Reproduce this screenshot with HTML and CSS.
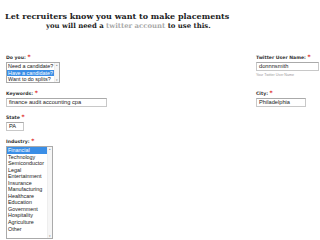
FILE: index.html
```html
<!DOCTYPE html>
<html>
<head>
<meta charset="utf-8">
<link rel="stylesheet" href="styles.css">
</head>
<body>
<div class="header">
  <div class="title">Let recruiters know you want to make placements</div>
  <div class="subtitle">you will need a <span class="link">twitter account</span> to use this.</div>
</div>
<div class="form">
  <div class="field">
    <div class="label">Do you: <span class="req">*</span></div>
    <div class="listbox lb-small">
      <div class="opts">
        <div class="opt">Need a candidate?</div>
        <div class="opt sel">Have a candidate?</div>
        <div class="opt">Want to do splits?</div>
      </div>
      <div class="sb"><span class="arr">&#9652;</span><span class="arr">&#9662;</span></div>
    </div>
  </div>
  <div class="field">
    <div class="label">Twitter User Name: <span class="req">*</span></div>
    <div class="input in-tw">donnnsmith</div>
    <div class="hint">Your Twitter User Name</div>
  </div>
  <div class="field">
    <div class="label">Keywords: <span class="req">*</span></div>
    <div class="input in-kw">finance audit accounting cpa</div>
  </div>
  <div class="field">
    <div class="label">City: <span class="req">*</span></div>
    <div class="input in-city">Philadelphia</div>
  </div>
  <div class="field">
    <div class="label">State <span class="req">*</span></div>
    <div class="input in-state">PA</div>
  </div>
  <div></div>
  <div class="field">
    <div class="label">Industry: <span class="req">*</span></div>
    <div class="listbox lb-ind">
      <div class="opts">
        <div class="opt sel">Financial</div>
        <div class="opt">Technology</div>
        <div class="opt">Semiconductor</div>
        <div class="opt">Legal</div>
        <div class="opt">Entertainment</div>
        <div class="opt">Insurance</div>
        <div class="opt">Manufacturing</div>
        <div class="opt">Healthcare</div>
        <div class="opt">Education</div>
        <div class="opt">Government</div>
        <div class="opt">Hospitality</div>
        <div class="opt">Agriculture</div>
        <div class="opt">Other</div>
      </div>
      <div class="sb"><span class="arr">&#9652;</span><span class="arr">&#9662;</span></div>
    </div>
  </div>
</div>
</body>
</html>
```
FILE: styles.css
```css
html, body {
  margin: 0;
  padding: 0;
  background: #fff;
  font-family: "Liberation Sans", Arial, sans-serif;
  color: #222;
}
.header {
  padding-top: 11px;
}
.title {
  margin-left: 5px;
  font-family: "DejaVu Serif", Georgia, serif;
  font-weight: 700;
  font-size: 8px;
  line-height: 11px;
  height: 11px;
  color: #222;
  white-space: nowrap;
}
.subtitle {
  margin-left: 46px;
  font-family: "DejaVu Serif", Georgia, serif;
  font-weight: 700;
  font-size: 6.9px;
  line-height: 9px;
  height: 9px;
  color: #222;
  white-space: nowrap;
}
.link {
  color: #aaa;
}
.form {
  display: grid;
  grid-template-columns: 250px 1fr;
  padding-left: 6px;
  margin-top: 22px;
  row-gap: 6px;
}
.field {
  display: flex;
  flex-direction: column;
  align-items: flex-start;
}
.label {
  height: 7px;
  font-family: "DejaVu Sans", Verdana, sans-serif;
  font-weight: 700;
  font-size: 4.6px;
  line-height: 7px;
  color: #333;
  margin-bottom: 2px;
  white-space: nowrap;
}
.req {
  color: #d22;
  font-size: 6px;
  line-height: 7px;
}
.input {
  box-sizing: border-box;
  height: 9px;
  border: 1px solid #c8c8c8;
  border-top-color: #aaa;
  font-size: 5.7px;
  line-height: 7px;
  padding-left: 2px;
  color: #222;
  white-space: nowrap;
}
.in-tw { width: 63px; }
.in-kw { width: 101px; }
.in-city { width: 50px; }
.in-state { width: 18px; }
.hint {
  font-size: 3.6px;
  color: #999;
  margin-top: 2px;
  line-height: 5px;
  height: 5px;
}
.listbox {
  box-sizing: border-box;
  display: flex;
  border: 1px solid #aaa;
  background: #fff;
}
.lb-small { width: 54px; height: 21px; }
.lb-ind { width: 47px; height: 93px; }
.opts {
  flex: 1;
  display: flex;
  flex-direction: column;
  overflow: hidden;
}
.opt {
  flex: none;
  font-size: 5.4px;
  line-height: 6.55px;
  height: 6.55px;
  padding-left: 1px;
  color: #222;
  white-space: nowrap;
  overflow: hidden;
}
.opt.sel {
  background: #3a8ee6;
  color: #fff;
}
.sb {
  width: 4px;
  display: flex;
  flex-direction: column;
  justify-content: space-between;
  border-left: 1px solid #eee;
  background: #f6f6f6;
}
.arr {
  font-size: 3px;
  line-height: 4px;
  color: #888;
  text-align: center;
}
```
